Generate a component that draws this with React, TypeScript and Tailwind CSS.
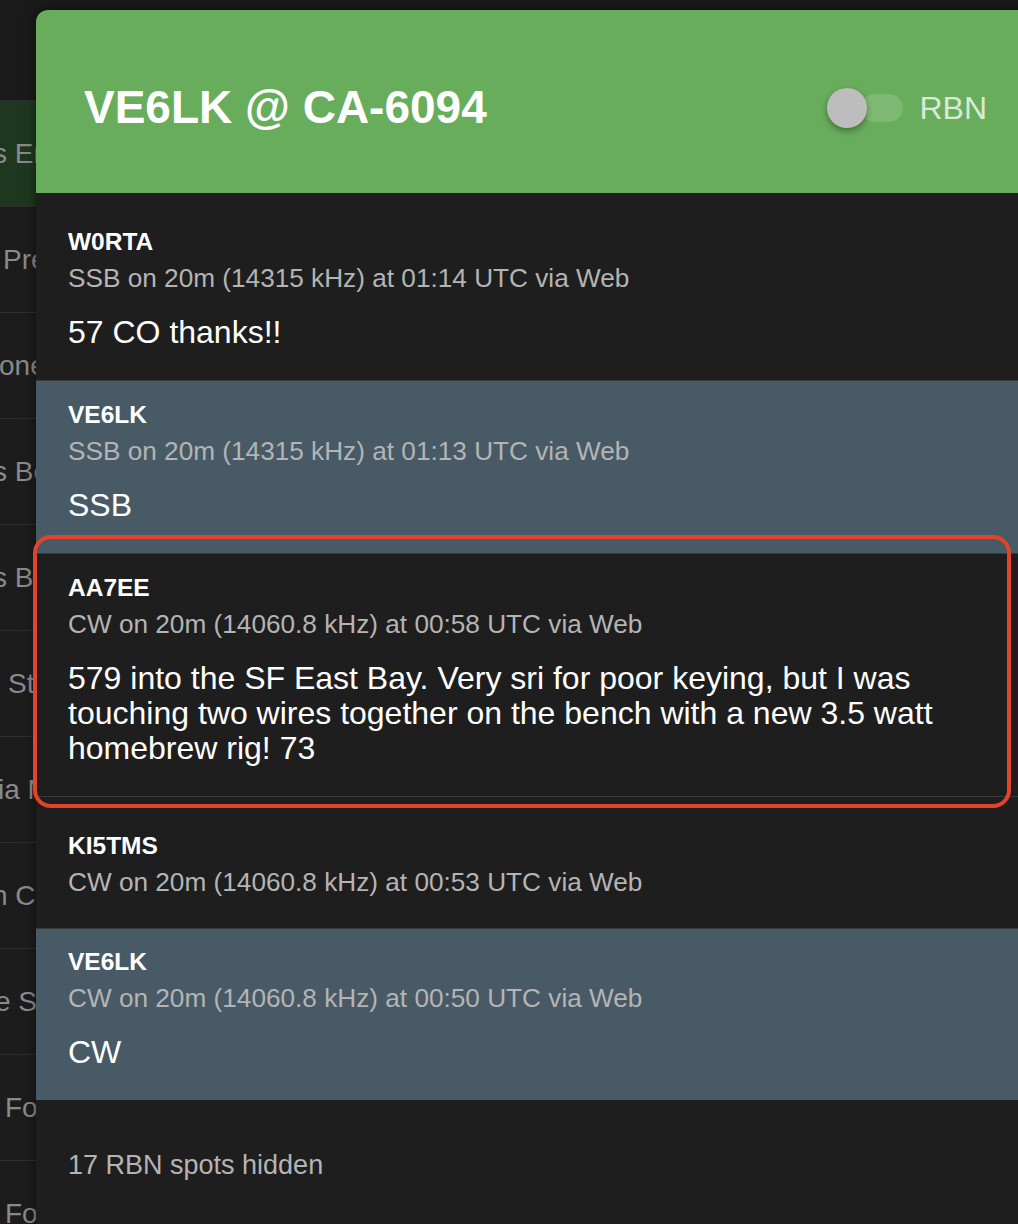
import React from 'react'

const backRows = [
  { text: 's Entry', ml: 'ml-[-7px]', active: true },
  { text: 'Prefs', ml: 'ml-[3px]' },
  { text: 'one', ml: 'ml-[-1px]' },
  { text: 's Bell', ml: 'ml-[-7px]' },
  { text: 's Book', ml: 'ml-[-7px]' },
  { text: 'Stats', ml: 'ml-[8px]' },
  { text: 'ia Map', ml: 'ml-[-2px]' },
  { text: 'n Chat', ml: 'ml-[-8px]' },
  { text: 'e Spots', ml: 'ml-[-5px]' },
  { text: 'Forum', ml: 'ml-[5px]' },
  { text: 'Forum', ml: 'ml-[5px]' },
]

type Spot = {
  call: string
  meta: string
  comment?: string
  mine?: boolean
  pad: string
}

const spots: Spot[] = [
  {
    call: 'W0RTA',
    meta: 'SSB on 20m (14315 kHz) at 01:14 UTC via Web',
    comment: '57 CO thanks!!',
    pad: 'pt-[19px] pb-[30px]',
  },
  {
    call: 'VE6LK',
    meta: 'SSB on 20m (14315 kHz) at 01:13 UTC via Web',
    comment: 'SSB',
    mine: true,
    pad: 'pt-[19px] pb-[30px]',
  },
  {
    call: 'AA7EE',
    meta: 'CW on 20m (14060.8 kHz) at 00:58 UTC via Web',
    comment:
      '579 into the SF East Bay. Very sri for poor keying, but I was touching two wires together on the bench with a new 3.5 watt homebrew rig! 73',
    pad: 'pt-[19px] pb-[30px]',
  },
  {
    call: 'KI5TMS',
    meta: 'CW on 20m (14060.8 kHz) at 00:53 UTC via Web',
    pad: 'pt-[34px] pb-[31px]',
  },
  {
    call: 'VE6LK',
    meta: 'CW on 20m (14060.8 kHz) at 00:50 UTC via Web',
    comment: 'CW',
    mine: true,
    pad: 'pt-[18px] pb-[30px]',
  },
]

export default function App() {
  return (
    <div className="relative h-[1224px] w-[1018px] overflow-hidden bg-[#1b1b1b] font-['Liberation_Sans',Arial,sans-serif]">
      {/* Page behind the sheet */}
      <div className="flex flex-col">
        <div className="h-[100px] bg-[#1a1a1a]"></div>
        {backRows.map((row, i) => (
          <div
            key={i}
            className={`flex h-[106px] items-center border-t border-[#2e2e2e] overflow-hidden whitespace-nowrap ${
              row.active ? 'bg-[#1e381f]' : 'bg-[#1c1c1c]'
            }`}
          >
            <span className={`${row.ml} text-[28px] text-[#8a8a8a]`}>{row.text}</span>
          </div>
        ))}
      </div>

      {/* Sheet */}
      <div className="absolute left-[36px] top-[10px] w-[1000px] h-[1300px] overflow-hidden rounded-tl-[12px] bg-[#1e1e1e] shadow-[0_0_12px_rgba(0,0,0,0.5)]">
        <header className="flex h-[183px] items-center justify-between bg-[#67ad5b] pl-[48px] pr-[49px]">
          <h1 className="text-[46px] font-bold text-white pt-[12px]">VE6LK @ CA-6094</h1>
          <div className="flex items-center pt-[12px]">
            <div className="relative h-[28px] w-[76px]">
              <div className="absolute left-[34px] top-0 h-[28px] w-[42px] rounded-full bg-white/15"></div>
              <div className="absolute left-0 top-[-6px] h-[40px] w-[40px] rounded-full bg-[#bdbdbd] shadow-[0_3px_6px_rgba(0,0,0,0.35)]"></div>
            </div>
            <span className="ml-[16px] text-[32px] text-white/75">RBN</span>
          </div>
        </header>

        <ul className="pt-[15px]">
          {spots.map((s, i) => (
            <li
              key={i}
              className={`pl-[32px] pr-[40px] ${s.pad} ${i > 0 ? 'border-t border-[#3a3a3a]' : ''} ${
                s.mine ? 'bg-[#485a66]' : 'bg-[#1e1e1e]'
              }`}
            >
              <div className="text-[24.5px] leading-[30px] font-bold text-white">{s.call}</div>
              <div className="mt-[6px] text-[26.2px] leading-[30px] text-[#b4b4b4]">{s.meta}</div>
              {s.comment && (
                <div className="mt-[22px] text-[32px] leading-[35px] text-white">{s.comment}</div>
              )}
            </li>
          ))}
        </ul>

        <div className="pl-[32px] pt-[50px] text-[27px] leading-[30px] text-[#b4b4b4]">17 RBN spots hidden</div>
      </div>

      {/* Highlight annotation */}
      <div className="absolute left-[33px] top-[535px] h-[273px] w-[978px] rounded-[18px] border-[4px] border-[#e2432a]"></div>
    </div>
  )
}
